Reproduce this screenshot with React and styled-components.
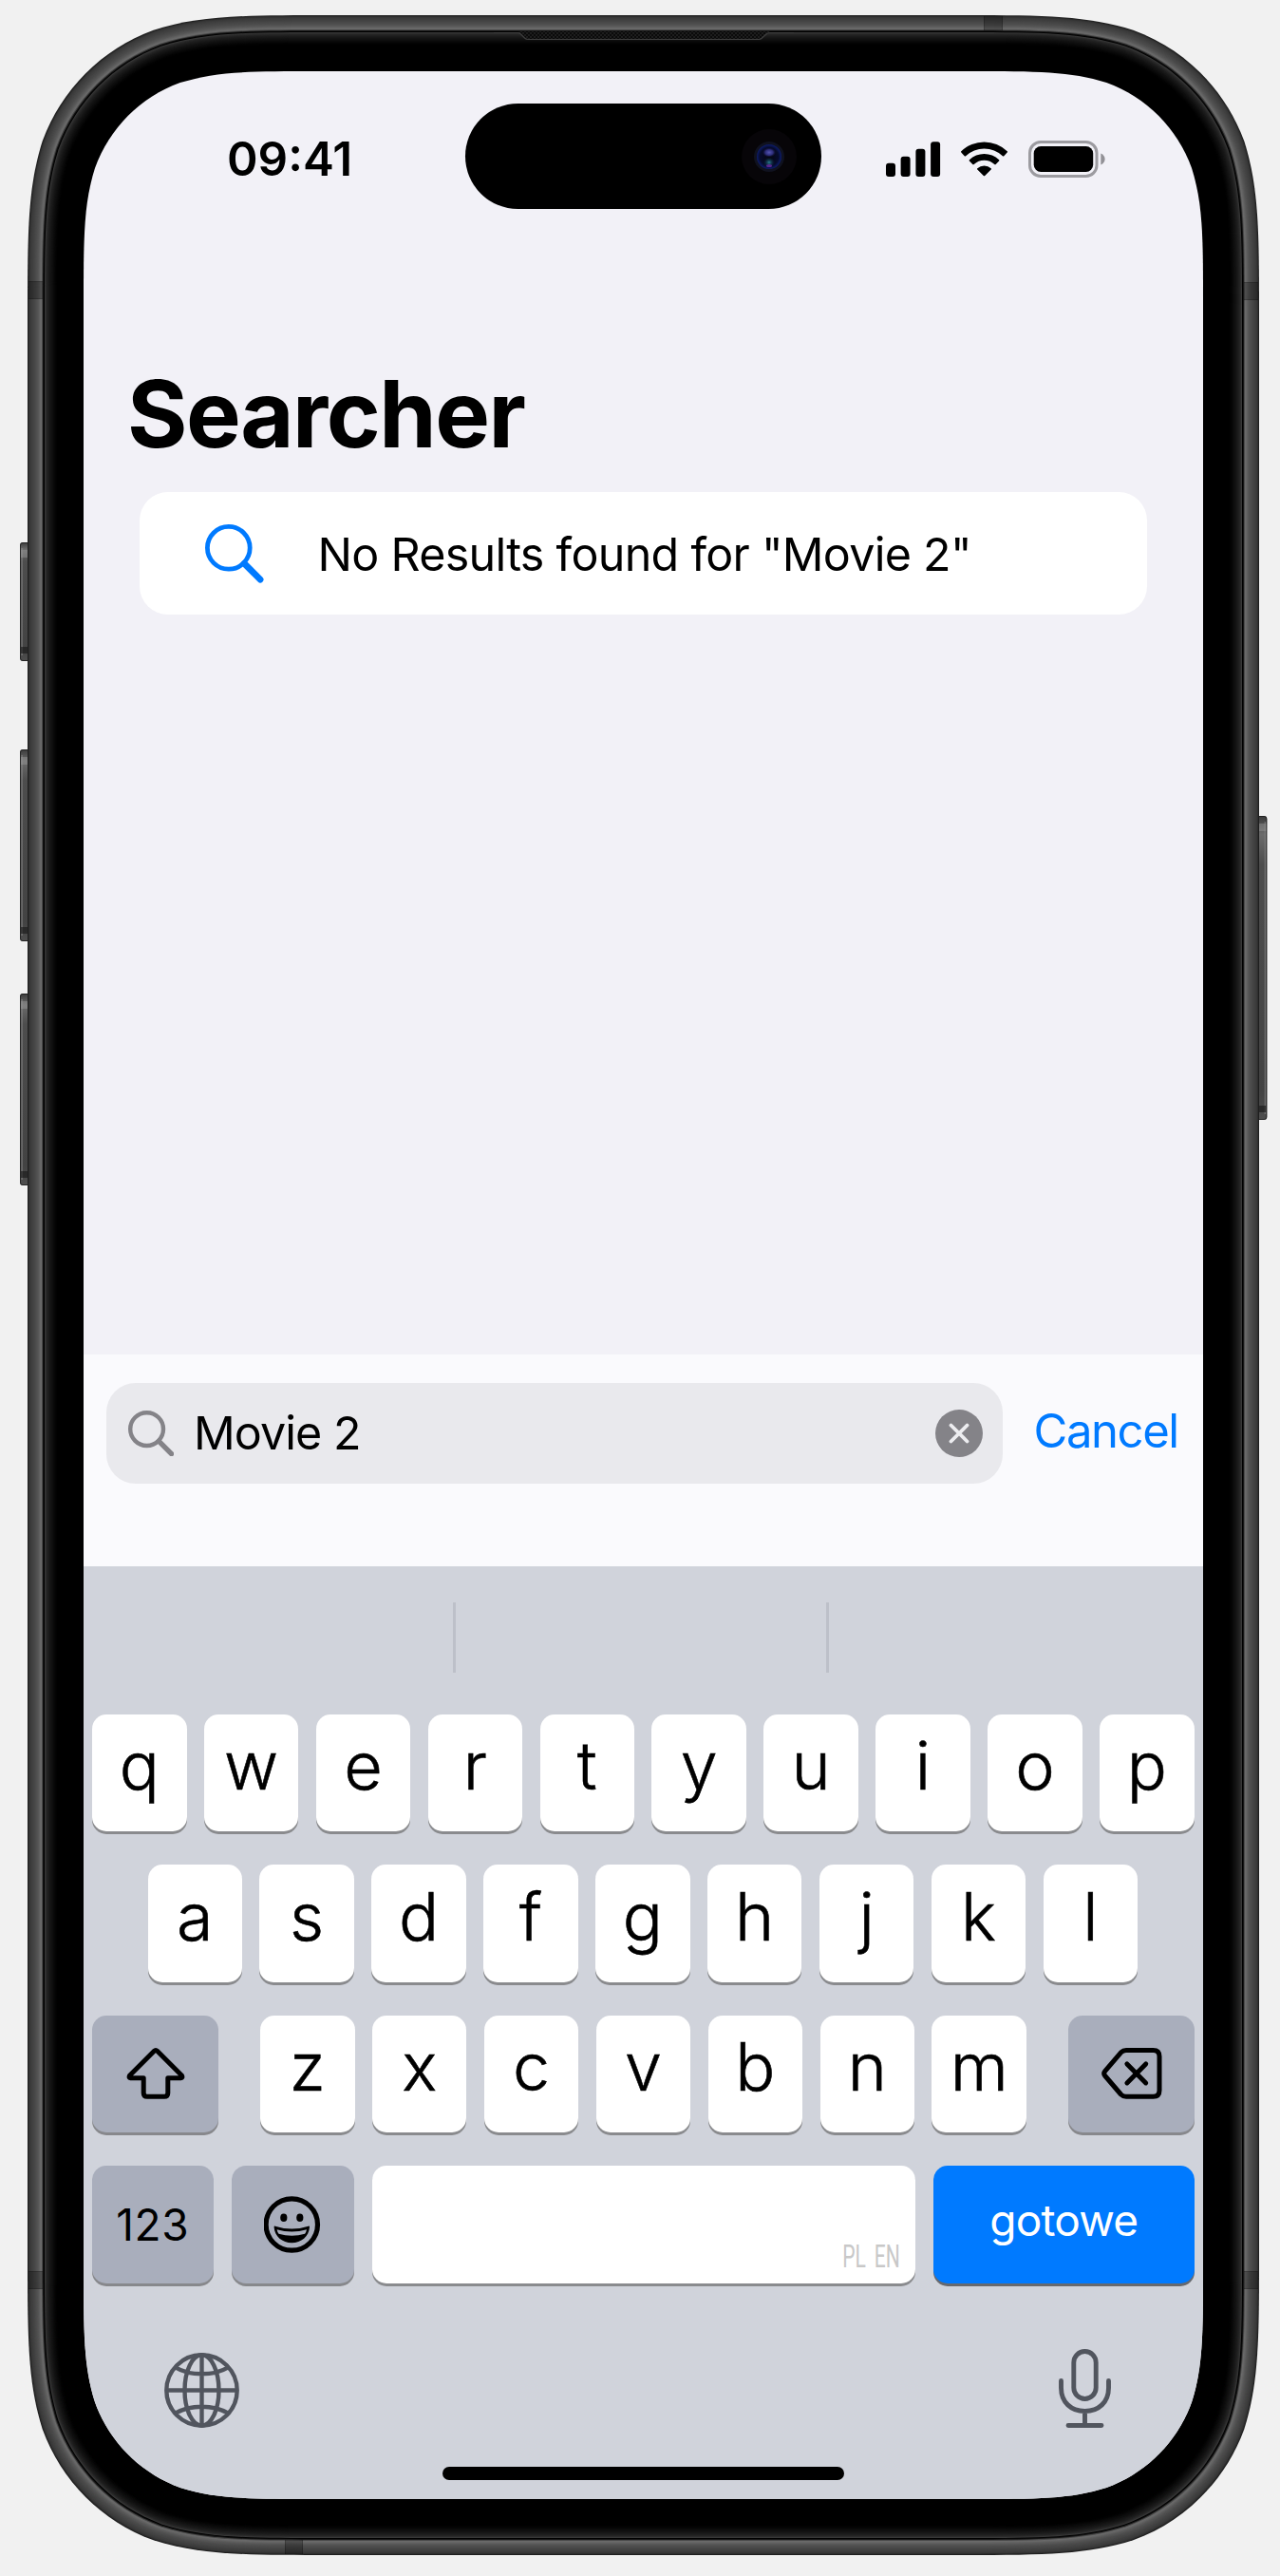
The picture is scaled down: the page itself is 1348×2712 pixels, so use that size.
import React from "react";
import styled, { createGlobalStyle, css } from "styled-components";

/* ---------- shape helpers ---------- */

// Rounded rectangle with continuous-curvature corners.
function smoothRect(x, y, w, h, r) {
  const a = 1.52866483 * r;
  const b = 1.08849299 * r;
  const c = 0.86840701 * r;
  const d = 0.63149399 * r;
  const e = 0.37282401 * r;
  const f = 0.16905899 * r;
  const g = 0.07491139 * r;
  const R = x + w;
  const B = y + h;
  return [
    `M${x + a} ${y}`,
    `L${R - a} ${y}`,
    `C${R - b} ${y} ${R - c} ${y} ${R - d} ${y + g}`,
    `C${R - e} ${y + f} ${R - f} ${y + e} ${R - g} ${y + d}`,
    `C${R} ${y + c} ${R} ${y + b} ${R} ${y + a}`,
    `L${R} ${B - a}`,
    `C${R} ${B - b} ${R} ${B - c} ${R - g} ${B - d}`,
    `C${R - f} ${B - e} ${R - e} ${B - f} ${R - d} ${B - g}`,
    `C${R - c} ${B} ${R - b} ${B} ${R - a} ${B}`,
    `L${x + a} ${B}`,
    `C${x + b} ${B} ${x + c} ${B} ${x + d} ${B - g}`,
    `C${x + e} ${B - f} ${x + f} ${B - e} ${x + g} ${B - d}`,
    `C${x} ${B - c} ${x} ${B - b} ${x} ${B - a}`,
    `L${x} ${y + a}`,
    `C${x} ${y + b} ${x} ${y + c} ${x + g} ${y + d}`,
    `C${x + f} ${y + e} ${x + e} ${y + f} ${x + d} ${y + g}`,
    `C${x + c} ${y} ${x + b} ${y} ${x + a} ${y}`,
    "Z",
  ].join(" ");
}

const SCREEN_CLIP = smoothRect(0, 0, 1179, 2556, 161);

// Colour of each 1px ring from the outer edge inwards: metal rail, seam, glass edge.
const RINGS = [
  "#1f1f1f", "#2f2f2f", "#383838", "#3c3c3c", "#3f3f3f", "#424242",
  "#454545", "#484848", "#4b4b4b", "#4f4f4f", "#535353", "#585858",
  "#5f5f5f", "#666666", "#6a6a6a", "#4a4a4a", "#151515", "#000000",
  "#363636", "#2b2b2b", "#242424", "#1f1f1f", "#1b1b1b", "#171717",
  "#131313", "#101010", "#0d0d0d", "#0a0a0a", "#070707", "#040404",
  "#020202", "#000000",
];

/* ---------- page and device ---------- */

const GlobalStyle = createGlobalStyle`
  * { box-sizing: border-box; }
  html, body { margin: 0; padding: 0; background: #f1f1f1; }
  body { font-family: Inter, "Liberation Sans", sans-serif; color: #000; }
  svg { display: block; flex: none; }
`;

const Page = styled.main`
  position: relative;
  width: 1348px;
  height: 2712px;
  padding: 75px 81px 81px 88px;
  overflow: hidden;
  background: #f1f1f1;
`;

const Bezel = styled.svg`
  position: absolute;
  inset: 0;
`;

const Screen = styled.div`
  position: relative;
  display: flex;
  flex-direction: column;
  width: 1179px;
  height: 2556px;
  background: #f2f1f7;
  clip-path: path("${SCREEN_CLIP}");
`;

/* ---------- status bar ---------- */

const StatusBar = styled.header`
  display: grid;
  grid-template-columns: 402px 375px 402px;
  align-items: center;
  height: 177px;
`;

const Clock = styled.time`
  padding: 7px 0 0 151px;
  font-size: 49.4px;
  font-weight: 600;
  line-height: 60px;
`;

const Island = styled.div`
  display: flex;
  align-items: center;
  justify-content: flex-end;
  height: 111px;
  margin-top: 2px;
  padding-right: 26px;
  border-radius: 56px;
  background: #000;
`;

const StatusIcons = styled.div`
  display: flex;
  align-items: center;
  gap: 21.5px;
  padding: 7px 0 0 68.3px;
`;

/* ---------- content ---------- */

const Content = styled.section`
  flex: 1;
  padding: 132px 59px 0;
`;

const Title = styled.h1`
  margin: 0 0 31px -13px;
  font-size: 97px;
  font-weight: 700;
  line-height: 103px;
  letter-spacing: -1.5px;
`;

const ResultCard = styled.div`
  display: flex;
  align-items: center;
  gap: 57px;
  height: 129px;
  padding: 1px 0 0 69px;
  border-radius: 30px;
  background: #fff;
`;

const ResultText = styled.p`
  margin: 0;
  padding-top: 1px;
  font-size: 48.4px;
  line-height: 60px;
  letter-spacing: -0.7px;
  white-space: nowrap;
`;

/* ---------- search bar ---------- */

const SearchPanel = styled.section`
  display: flex;
  align-items: flex-start;
  height: 223px;
  padding: 30px 0 0 24px;
  background: #fafafd;
`;

const SearchField = styled.div`
  display: flex;
  align-items: center;
  width: 943.5px;
  height: 105.5px;
  padding: 0 20.5px 0 22.7px;
  border-radius: 31px;
  background: #e9e9ed;
`;

const Query = styled.span`
  flex: 1;
  padding: 1px 0 0 21px;
  font-size: 48.4px;
  line-height: 60px;
  letter-spacing: -0.9px;
`;

const Cancel = styled.a`
  padding: 20px 0 0 33px;
  font-size: 49px;
  line-height: 61px;
  letter-spacing: -1.4px;
  color: #007aff;
`;

/* ---------- keyboard ---------- */

const Keyboard = styled.section`
  display: flex;
  flex-direction: column;
  height: 982px;
  padding: 38px 9px 0;
  background: #d0d3db;
`;

const Suggestions = styled.div`
  display: grid;
  grid-template-columns: 383px 393px 1fr;
  height: 74px;
  margin-bottom: 43.5px;
`;

const Suggestion = styled.div`
  border-right: ${(p) => (p.$last ? "none" : "3px solid #bdc0c9")};
`;

const Rows = styled.div`
  display: flex;
  flex-direction: column;
  gap: 35px;
`;

const Row = styled.div`
  display: flex;
  justify-content: ${(p) => (p.$spread ? "space-between" : "flex-start")};
  gap: ${(p) => (p.$spread ? 0 : 19)}px;
  padding: 0 ${(p) => p.$inset || 0}px;
`;

const Letters = styled.div`
  display: flex;
  gap: 18.4px;
`;

const keyTones = {
  light: css`
    background: #fff;
    box-shadow: 0 3px 0 #8a8b8e;
  `,
  dark: css`
    background: #a9aebc;
    box-shadow: 0 3px 0 #87888c;
  `,
  action: css`
    background: #007aff;
    color: #fff;
    box-shadow: 0 3px 0 #66696f;
  `,
};

const Key = styled.button`
  display: flex;
  align-items: center;
  justify-content: center;
  flex: none;
  width: ${(p) => p.$width || 99.5}px;
  height: 123.5px;
  margin: 0;
  padding: 0 0 ${(p) => p.$lift || 0}px;
  border: 0;
  border-radius: 15px;
  font-family: inherit;
  font-size: 46px;
  font-weight: 400;
  line-height: 84px;
  letter-spacing: ${(p) => p.$tracking || 0}px;
  color: #000;
  ${(p) => keyTones[p.$tone || "light"]}
`;

const LetterKey = styled(Key)`
  padding: 0 0 14.5px;
  font-size: 70px;
  font-weight: 300;
  -webkit-text-stroke: 0.6px #000;
`;

const SpaceKey = styled(Key)`
  align-items: flex-end;
  justify-content: flex-end;
  padding: 0 15.5px 8.5px 0;
`;

const Languages = styled.span`
  font-family: Roboto, "Liberation Sans", sans-serif;
  font-size: 34px;
  line-height: 40px;
  word-spacing: 6px;
  color: #c8c8c8;
  transform: scaleX(0.62);
  transform-origin: right center;
`;

const KeyboardFooter = styled.div`
  display: flex;
  align-items: flex-start;
  justify-content: space-between;
  height: 124px;
  margin-top: 69px;
  padding: 0 88px 0 76px;
`;

const GlobeButton = styled.div`
  padding-top: 4px;
`;

const HomeIndicator = styled.div`
  width: 422.5px;
  height: 14.5px;
  margin: 0 0 0 369px;
  border-radius: 8px;
  background: #000;
`;

/* ---------- drawings ---------- */

function Band({ x, y, w, h }) {
  return (
    <g>
      <rect x={x} y={y} width={w} height={h} fill="#000" fillOpacity="0.26" />
      {w < 18 ? (
        <path d={`M${x} ${y + 0.5}H${x + w}M${x} ${y + h - 0.5}H${x + w}`} stroke="#000" strokeOpacity="0.2" />
      ) : (
        <path d={`M${x + 0.5} ${y}V${y + h}M${x + w - 0.5} ${y}V${y + h}`} stroke="#000" strokeOpacity="0.2" />
      )}
    </g>
  );
}

function SideButton({ y, h, right }) {
  const x = right ? 1322 : 21;
  const w = right ? 12.3 : 12;
  return (
    <g>
      <rect x={x} y={y} width={w} height={h} rx="3" fill="url(#button)" />
      <rect x={x + 0.5} y={y + 0.5} width={w - 1} height={h - 1} rx="2.5" fill="none" stroke="#1c1c1c" strokeOpacity="0.8" />
      <rect x={right ? x + w - 2.6 : x + 1.4} y={y + 6} width="1.4" height={h - 12} fill="#858585" fillOpacity="0.65" />
      <rect x={x + 1} y={y + 8} width={w - 2} height="8" fill="#a0a0a0" fillOpacity="0.4" />
      <rect x={x + 1} y={y + h - 15} width={w - 2} height="7" fill="#111" fillOpacity="0.55" />
    </g>
  );
}

function DeviceFrame() {
  return (
    <Bezel width="1348" height="2712" viewBox="0 0 1348 2712" aria-hidden="true">
      <defs>
        <linearGradient id="button" x1="0" y1="0" x2="0" y2="1">
          <stop offset="0" stopColor="#3a3a3a" />
          <stop offset="0.06" stopColor="#6b6b6b" />
          <stop offset="0.16" stopColor="#4d4d4d" />
          <stop offset="0.9" stopColor="#434343" />
          <stop offset="1" stopColor="#4e4e4e" />
        </linearGradient>
        <pattern id="mesh" width="4" height="4" patternUnits="userSpaceOnUse">
          <rect width="4" height="4" fill="#0b0b0b" />
          <rect width="2" height="2" fill="#1d1d1d" />
          <rect x="2" y="2" width="2" height="2" fill="#1d1d1d" />
        </pattern>
      </defs>
      <SideButton y={571} h={125} />
      <SideButton y={789} h={202} />
      <SideButton y={1046} h={202} />
      <SideButton y={859} h={320} right />
      {RINGS.map((color, i) => (
        <path
          key={i}
          d={smoothRect(29 + i, 16 + i, 1297 - 2 * i, 2674 - 2 * i, 210 - i * 0.83)}
          fill={color}
        />
      ))}
      <Band x={30} y={296} w={15} h={19} />
      <Band x={1310} y={297} w={15} h={19} />
      <Band x={30} y={2391} w={15} h={19} />
      <Band x={1310} y={2391} w={15} h={19} />
      <Band x={1036} y={17} w={20} h={15} />
      <Band x={300} y={2674} w={19} h={15} />
      <path d="M546 33H811L801 40.5Q800 41.5 798 41.5H557Q555 41.5 553.5 40Z" fill="url(#mesh)" />
      <path
        d="M520 34.5H545Q547 34.5 548.5 36L552.5 40Q554 41.5 556 41.5H799Q801 41.5 802.5 40L807 36Q808.5 34.5 811 34.5H836"
        fill="none"
        stroke="#3d3d3d"
        strokeWidth="1.2"
      />
    </Bezel>
  );
}

function Camera() {
  return (
    <svg width="58" height="58" viewBox="-29 -29 58 58">
      <defs>
        <radialGradient id="lens">
          <stop offset="0" stopColor="#05060f" />
          <stop offset="0.75" stopColor="#060b2c" />
          <stop offset="1" stopColor="#0d1c6c" />
        </radialGradient>
        <radialGradient id="glow">
          <stop offset="0" stopColor="#5454b0" />
          <stop offset="0.6" stopColor="#2c2c78" />
          <stop offset="1" stopColor="#15153f" stopOpacity="0" />
        </radialGradient>
        <radialGradient id="teal">
          <stop offset="0" stopColor="#2b7f93" />
          <stop offset="1" stopColor="#0a2740" stopOpacity="0" />
        </radialGradient>
      </defs>
      <circle r="29" fill="#070508" />
      <circle r="16" fill="#10121f" />
      <circle r="13" fill="url(#lens)" />
      <ellipse cy="-4.5" rx="7" ry="5" fill="url(#glow)" />
      <ellipse cy="6" rx="6" ry="5.5" fill="url(#teal)" />
      <ellipse cy="9.5" rx="3" ry="1.5" fill="#7a2bb0" fillOpacity="0.7" />
    </svg>
  );
}

function Signal() {
  return (
    <svg width="57.5" height="37" viewBox="0 0 57.5 37">
      <rect x="0" y="22.8" width="10" height="14.2" rx="3" />
      <rect x="15.6" y="15.8" width="10" height="21.2" rx="3" />
      <rect x="31.4" y="7.8" width="10" height="29.2" rx="3" />
      <rect x="47.1" y="0.2" width="10" height="36.8" rx="3" />
    </svg>
  );
}

function Wifi() {
  return (
    <svg width="49" height="37" viewBox="0 0 49 37">
      <path d="M0.3 10.200A34.8 34.8 0 0 1 48.7 10.200Q49.300 10.800 48.700 11.400L45.300 15.200Q44.600 15.900 43.900 15.200A28.200 28.200 0 0 0 5.100 15.200Q4.400 15.900 3.700 15.200L0.300 11.400Q-0.300 10.800 0.300 10.200Z" />
      <path d="M8.900 19.200A22.500 22.500 0 0 1 40.100 19.200Q40.800 19.900 40.100 20.500L36.700 24Q36 24.600 35.300 24A15.900 15.900 0 0 0 13.700 24Q13 24.600 12.300 24L8.900 20.500Q8.200 19.900 8.900 19.200Z" />
      <path d="M17.300 28.200A10.700 10.700 0 0 1 31.700 28.200Q32.400 28.900 31.700 29.500L25.200 36Q24.500 36.700 23.800 36L17.300 29.500Q16.600 28.900 17.300 28.200Z" />
    </svg>
  );
}

function Battery() {
  return (
    <svg width="81" height="39" viewBox="0 0 81 39">
      <rect x="1.5" y="1.5" width="70.5" height="36" rx="11.5" fill="none" stroke="#9c9ba0" strokeWidth="3" />
      <rect x="5.7" y="6" width="62.5" height="27" rx="7.5" />
      <path d="M76.3 13.5C79 14.6 80.6 16.8 80.6 19.5S79 24.4 76.3 25.5Z" fill="#929196" />
    </svg>
  );
}

function Magnifier({ size, r, color, stroke, handle }) {
  const c = r + stroke / 2;
  const s = c + r * 0.735;
  const end = size - handle / 2;
  return (
    <svg width={size} height={size} viewBox={`0 0 ${size} ${size}`} fill="none" stroke={color}>
      <circle cx={c} cy={c} r={r} strokeWidth={stroke} />
      <path d={`M${s} ${s}L${end} ${end}`} strokeWidth={handle} strokeLinecap="round" />
    </svg>
  );
}

function ClearIcon() {
  return (
    <svg width="50" height="50" viewBox="0 0 50 50">
      <circle cx="25" cy="25" r="25" fill="#848388" />
      <path d="M16.5 16.5L33.5 33.5M33.5 16.5L16.5 33.5" stroke="#ededf0" strokeWidth="3.8" strokeLinecap="round" />
    </svg>
  );
}

function ShiftIcon() {
  return (
    <svg width="62" height="54" viewBox="0 0 62 54" fill="none" stroke="#000" strokeWidth="5" strokeLinejoin="round">
      <path d="M29.4 3.3Q31 1.7 32.6 3.3L58.6 29.3Q59.8 31.6 57.5 31.8H43.8V47.5Q43.8 51.3 40 51.3H22Q18.2 51.3 18.2 47.5V31.8H4.5Q2.2 31.6 3.4 29.3Z" />
    </svg>
  );
}

function DeleteIcon() {
  return (
    <svg width="64" height="54" viewBox="0 0 64 54" fill="none" stroke="#000" strokeWidth="5" strokeLinecap="round" strokeLinejoin="round">
      <path d="M20.5 4.8Q22.8 2.5 26 2.5H54.5Q61 2.5 61 9V44.8Q61 51.3 54.5 51.3H26Q22.8 51.3 20.5 49L3.8 29.5Q1.6 26.9 3.8 24.3Z" />
      <path d="M26.900 16.900L46.700 36.900M46.700 16.900L26.900 36.900" />
    </svg>
  );
}

function SmileyIcon() {
  return (
    <svg width="60" height="60" viewBox="0.7 0 60 60">
      <circle cx="30" cy="30" r="27.2" fill="none" stroke="#000" strokeWidth="5.2" />
      <ellipse cx="21.5" cy="22.8" rx="3.6" ry="4.3" />
      <ellipse cx="38.5" cy="22.8" rx="3.6" ry="4.3" />
      <path d="M12.6 31.7Q30 37.5 47.4 31.7Q48.800 31.300 48.700 32.800C48 42.500 40 49.300 30 49.300S12 42.500 11.300 32.800Q11.200 31.300 12.600 31.700Z" />
      <path d="M14.3 35.2Q30 39.7 45.7 35.2Q45.200 37.800 43.800 39.700Q30 43.800 16.200 39.700Q14.800 37.800 14.300 35.200Z" fill="#a9aebc" />
    </svg>
  );
}

function GlobeIcon() {
  return (
    <svg width="79" height="79" viewBox="-39.5 -39.5 79 79" fill="none" stroke="#51555e" strokeWidth="4.4">
      <circle r="37.2" />
      <ellipse rx="18" ry="37.2" />
      <path d="M0 -37.2V37.2M-37.2 0H37.2M-27.8 -24.2Q-16 -17.2 0 -17.2T27.8 -24.2M-27.8 24.2Q-16 17.2 0 17.2T27.8 24.2" />
    </svg>
  );
}

function MicIcon() {
  return (
    <svg width="55" height="84" viewBox="0 0 55 84" fill="none" stroke="#51555e" strokeWidth="4.9" strokeLinecap="round">
      <rect x="15.8" y="2.5" width="23.4" height="50" rx="11.7" />
      <path d="M2.5 33.5V41C2.5 56 13 65.5 27.5 65.5S52.5 56 52.5 41V33.5M27.5 65.5V80.5M10 80.5H45" />
    </svg>
  );
}

/* ---------- app ---------- */

function LetterKeys({ letters }) {
  return (
    <Letters>
      {letters.split("").map((letter) => (
        <LetterKey key={letter}>{letter}</LetterKey>
      ))}
    </Letters>
  );
}

export default function App() {
  return (
    <Page>
      <GlobalStyle />
      <DeviceFrame />
      <Screen>
        <StatusBar>
          <Clock>09:41</Clock>
          <Island>
            <Camera />
          </Island>
          <StatusIcons>
            <Signal />
            <Wifi />
            <Battery />
          </StatusIcons>
        </StatusBar>

        <Content>
          <Title>Searcher</Title>
          <ResultCard>
            <Magnifier size={61.5} r={22.4} color="#007aff" stroke={4.8} handle={6.8} />
            <ResultText>No Results found for "Movie 2"</ResultText>
          </ResultCard>
        </Content>

        <SearchPanel>
          <SearchField>
            <Magnifier size={48.3} r={17.4} color="#848388" stroke={4.4} handle={5.4} />
            <Query>Movie 2</Query>
            <ClearIcon />
          </SearchField>
          <Cancel>Cancel</Cancel>
        </SearchPanel>

        <Keyboard>
          <Suggestions>
            <Suggestion />
            <Suggestion />
            <Suggestion $last />
          </Suggestions>
          <Rows>
            <Row>
              <LetterKeys letters="qwertyuiop" />
            </Row>
            <Row $inset={58.5}>
              <LetterKeys letters="asdfghjkl" />
            </Row>
            <Row $spread>
              <Key $tone="dark" $width={133}>
                <ShiftIcon />
              </Key>
              <LetterKeys letters="zxcvbnm" />
              <Key $tone="dark" $width={133}>
                <DeleteIcon />
              </Key>
            </Row>
            <Row>
              <Key $tone="dark" $width={127.5} $tracking={0.6}>
                123
              </Key>
              <Key $tone="dark" $width={129}>
                <SmileyIcon />
              </Key>
              <SpaceKey $width={572}>
                <Languages>PL EN</Languages>
              </SpaceKey>
              <Key $tone="action" $width={275.5} $tracking={-0.8} $lift={9}>
                gotowe
              </Key>
            </Row>
          </Rows>
          <KeyboardFooter>
            <GlobeButton>
              <GlobeIcon />
            </GlobeButton>
            <MicIcon />
          </KeyboardFooter>
          <HomeIndicator />
        </Keyboard>
      </Screen>
    </Page>
  );
}
